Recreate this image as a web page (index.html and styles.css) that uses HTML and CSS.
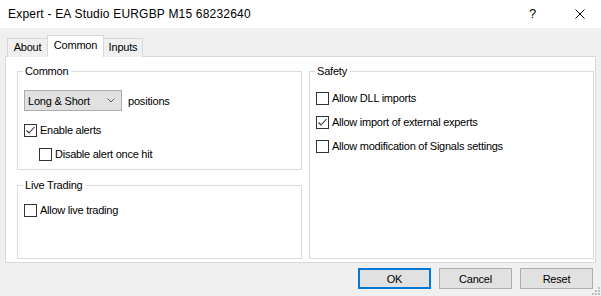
FILE: index.html
```html
<!DOCTYPE html>
<html lang="en">
<head>
  <meta charset="UTF-8">
  <title>Expert</title>
  <link rel="stylesheet" href="styles.css">
</head>
<body>

  <div class="titlebar">
    <span class="title">Expert - EA Studio EURGBP M15 68232640</span>
    <span class="help">?</span>
    <span class="close">
      <svg width="10" height="10" viewBox="0 0 10 10"><path d="M0.5 0.5 L9.5 9.5 M9.5 0.5 L0.5 9.5" stroke="#000" stroke-width="1" fill="none"/></svg>
    </span>
  </div>

  <div class="content">
    <div class="tabs">
      <div class="tab">About</div>
      <div class="tab active">Common</div>
      <div class="tab">Inputs</div>
    </div>

    <div class="panel">
      <div class="col">
        <div class="group group-common">
          <div class="legend">Common</div>
          <div class="select-row">
            <div class="select">
              <span>Long &amp; Short</span>
              <svg width="8" height="5" viewBox="0 0 8 5"><path d="M0.5 0.5 L4 4 L7.5 0.5" stroke="#606060" stroke-width="1" fill="none"/></svg>
            </div>
            <span class="select-label">positions</span>
          </div>
          <label class="check first-check">
            <span class="box checked"><svg width="11" height="11" viewBox="0 0 11 11"><path d="M1.5 5.5 L4 8 L9.5 2" stroke="#333" stroke-width="1.1" fill="none"/></svg></span>
            Enable alerts
          </label>
          <label class="check sub-check">
            <span class="box"></span>
            Disable alert once hit
          </label>
        </div>

        <div class="group group-live">
          <div class="legend">Live Trading</div>
          <label class="check first-check">
            <span class="box"></span>
            Allow live trading
          </label>
        </div>
      </div>

      <div class="col">
        <div class="group group-safety">
          <div class="legend">Safety</div>
          <label class="check safety-first">
            <span class="box"></span>
            Allow DLL imports
          </label>
          <label class="check safety-next">
            <span class="box checked"><svg width="11" height="11" viewBox="0 0 11 11"><path d="M1.5 5.5 L4 8 L9.5 2" stroke="#333" stroke-width="1.1" fill="none"/></svg></span>
            Allow import of external experts
          </label>
          <label class="check safety-next">
            <span class="box"></span>
            Allow modification of Signals settings
          </label>
        </div>
      </div>
    </div>

    <div class="buttons">
      <button class="btn default-btn">OK</button>
      <button class="btn">Cancel</button>
      <button class="btn">Reset</button>
    </div>
  </div>

  <svg class="grip" width="8" height="8" viewBox="0 0 8 8">
    <rect x="6" y="0" width="2" height="2" fill="#bfbfbf"/>
    <rect x="3" y="3" width="2" height="2" fill="#bfbfbf"/>
    <rect x="6" y="3" width="2" height="2" fill="#bfbfbf"/>
    <rect x="0" y="6" width="2" height="2" fill="#bfbfbf"/>
    <rect x="3" y="6" width="2" height="2" fill="#bfbfbf"/>
    <rect x="6" y="6" width="2" height="2" fill="#bfbfbf"/>
  </svg>

</body>
</html>
```

FILE: styles.css
```css
* {
  box-sizing: border-box;
}

body {
  margin: 0;
  width: 601px;
  height: 296px;
  overflow: hidden;
  position: relative;
  background-color: #f0f0f0;
  font-family: "Liberation Sans", Arial, sans-serif;
  font-size: 11px;
  color: #000;
}

.titlebar {
  height: 28px;
  background-color: #fff;
  display: flex;
  align-items: center;
  padding-left: 8px;
}

.title {
  flex: 1;
  font-size: 12px;
  letter-spacing: 0.2px;
}

.help {
  font-size: 13px;
  width: 10px;
  margin-right: 36px;
  margin-top: -1px;
}

.close {
  width: 10px;
  height: 10px;
  margin-right: 16px;
  display: flex;
}

.content {
  padding-top: 7px;
}

.tabs {
  display: flex;
  align-items: flex-end;
  height: 22px;
  margin-left: 7px;
  margin-bottom: -1px;
}

.tab {
  height: 19px;
  line-height: 17px;
  text-align: center;
  border: 1px solid #d9d9d9;
  border-bottom: none;
  background-color: #f0f0f0;
  letter-spacing: -0.2px;
}

.tab:first-child {
  width: 41px;
}

.tab:last-child {
  width: 40px;
  margin-left: -1px;
}

.tab.active {
  width: 57px;
  height: 22px;
  margin-left: -1px;
  line-height: 16px;
  padding-top: 1px;
  background-color: #fff;
  position: relative;
  z-index: 1;
}

.panel {
  margin-left: 5px;
  width: 591px;
  height: 207px;
  background-color: #fff;
  border: 1px solid #d9d9d9;
  display: flex;
  gap: 7px;
  padding: 14px 1px 3px 11px;
}

.col {
  width: 285px;
  display: flex;
  flex-direction: column;
}

.group {
  border: 1px solid #dcdcdc;
  padding-left: 6px;
}

.group-common {
  height: 99px;
}

.group-live {
  height: 74px;
  margin-top: 15px;
}

.group-safety {
  height: 188px;
}

.legend {
  width: max-content;
  margin-top: -7px;
  margin-left: -1px;
  padding: 0 3px 0 2px;
  line-height: 13px;
  background-color: #fff;
  letter-spacing: -0.2px;
}

.select-row {
  display: flex;
  align-items: center;
  margin-top: 12px;
}

.select {
  width: 98px;
  height: 21px;
  background-color: #e1e1e1;
  border: 1px solid #adadad;
  display: flex;
  align-items: center;
  justify-content: space-between;
  padding: 0 6px 0 3px;
  letter-spacing: -0.2px;
}

.select-label {
  margin-left: 6px;
  letter-spacing: -0.2px;
}

.check {
  display: flex;
  align-items: center;
  height: 13px;
  line-height: 13px;
  letter-spacing: -0.25px;
  white-space: nowrap;
}

.box {
  width: 13px;
  height: 13px;
  border: 1px solid #333;
  background-color: #fff;
  margin-right: 3px;
  display: flex;
  align-items: center;
  justify-content: center;
  flex: none;
}

.first-check {
  margin-top: 13px;
}

.group-live .first-check {
  margin-top: 12px;
}

.sub-check {
  margin-top: 11px;
  padding-left: 15px;
}

.safety-first {
  margin-top: 14px;
}

.safety-next {
  margin-top: 11px;
}

.buttons {
  display: flex;
  justify-content: flex-end;
  gap: 8px;
  margin-top: 5px;
  padding-right: 8px;
}

.btn {
  width: 73px;
  height: 21px;
  background-color: #e1e1e1;
  border: 1px solid #adadad;
  font-family: "Liberation Sans", Arial, sans-serif;
  font-size: 11px;
  color: #000;
  padding: 0;
  letter-spacing: -0.2px;
}

.default-btn {
  border: 2px solid #0078d7;
}

.grip {
  position: absolute;
  right: 1px;
  bottom: 1px;
}
```
